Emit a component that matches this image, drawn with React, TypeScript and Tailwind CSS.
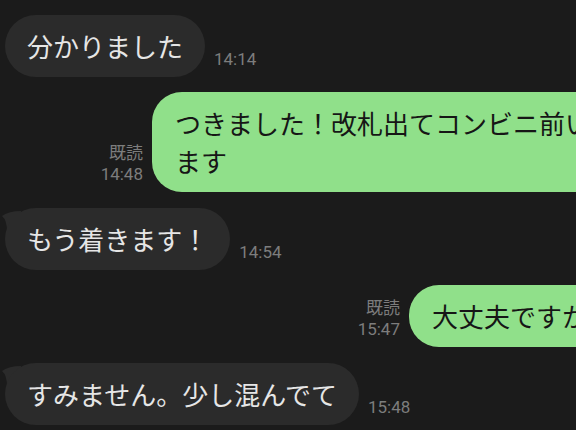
const jp = { fontFamily: '"Noto Sans CJK JP", "Noto Sans", sans-serif' };
const num = { fontFamily: 'Roboto, "Noto Sans CJK JP", sans-serif' };

// small LINE-style tail on the first bubble of a received group
function Tail() {
  return (
    <svg className="absolute left-[-5px] top-0" width="22" height="24" viewBox="0 0 22 24">
      <path d="M21 3 Q9 3 2 8 Q7 12 7 24 L21 24 Z" fill="#2b2b2b" />
    </svg>
  );
}

function Received({ text, time, tail }: { text: string; time: string; tail?: boolean }) {
  return (
    <div className="flex items-end gap-[8px] pl-[5px]">
      <div className="relative">
        {tail && <Tail />}
        <div
          className="relative rounded-[31px] bg-[#2b2b2b] py-3 px-[22px] text-[26px] leading-[38px] text-[#e6e6e6] whitespace-nowrap"
          style={jp}
        >
          {text}
        </div>
      </div>
      <div className="pb-[6px] pl-[1px] text-[17px] leading-[23px] text-[#7d7d7d]" style={num}>
        {time}
      </div>
    </div>
  );
}

function Sent({ lines, time, pr }: { lines: string[]; time: string; pr: string }) {
  return (
    <div className="flex items-end justify-end gap-[9px]">
      <div className="pb-[6px] text-right text-[17px] leading-[23px] text-[#7d7d7d]">
        <div style={jp}>既読</div>
        <div style={num}>{time}</div>
      </div>
      <div
        className={`rounded-[30px] bg-[#90e08a] py-3 pl-[23px] text-[26px] leading-[38px] text-[#161616] whitespace-nowrap ${pr}`}
        style={jp}
      >
        {lines.map((l, i) => (
          <div key={i}>{l}</div>
        ))}
      </div>
    </div>
  );
}

export default function App() {
  return (
    <div className="h-[430px] w-[576px] overflow-hidden bg-[#1b1b1b]">
      {/* wider than the window: sent bubbles run past the right edge */}
      <div className="flex w-[640px] flex-col pt-[15px]">
        <Received text="分かりました" time="14:14" />
        <div className="mt-[15px]">
          <Sent lines={['つきました！改札出てコンビニ前い', 'ます']} time="14:48" pr="pr-[49px]" />
        </div>
        <div className="mt-[16px]">
          <Received text="もう着きます！" time="14:54" tail />
        </div>
        <div className="mt-[15px]">
          <Sent lines={['大丈夫ですか？']} time="15:47" pr="pr-[26px]" />
        </div>
        <div className="mt-[16px]">
          <Received text="すみません。少し混んでて" time="15:48" tail />
        </div>
      </div>
    </div>
  );
}
